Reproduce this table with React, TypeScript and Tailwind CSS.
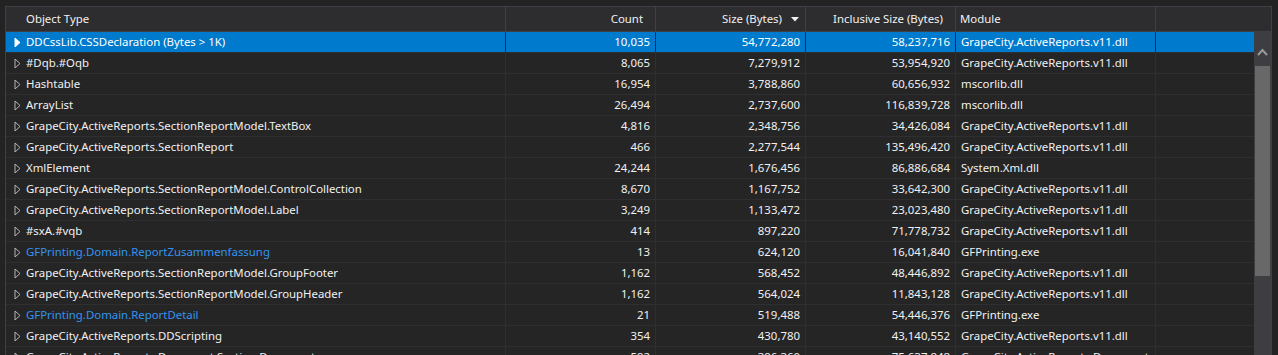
type Row = {
  name: string;
  count: string;
  size: string;
  incl: string;
  module: string;
  link?: boolean;
};

const AR = 'GrapeCity.ActiveReports.v11.dll';

const rows: Row[] = [
  { name: 'DDCssLib.CSSDeclaration (Bytes > 1K)', count: '10,035', size: '54,772,280', incl: '58,237,716', module: AR },
  { name: '#Dqb.#Oqb', count: '8,065', size: '7,279,912', incl: '53,954,920', module: AR },
  { name: 'Hashtable', count: '16,954', size: '3,788,860', incl: '60,656,932', module: 'mscorlib.dll' },
  { name: 'ArrayList', count: '26,494', size: '2,737,600', incl: '116,839,728', module: 'mscorlib.dll' },
  { name: 'GrapeCity.ActiveReports.SectionReportModel.TextBox', count: '4,816', size: '2,348,756', incl: '34,426,084', module: AR },
  { name: 'GrapeCity.ActiveReports.SectionReport', count: '466', size: '2,277,544', incl: '135,496,420', module: AR },
  { name: 'XmlElement', count: '24,244', size: '1,676,456', incl: '86,886,684', module: 'System.Xml.dll' },
  { name: 'GrapeCity.ActiveReports.SectionReportModel.ControlCollection', count: '8,670', size: '1,167,752', incl: '33,642,300', module: AR },
  { name: 'GrapeCity.ActiveReports.SectionReportModel.Label', count: '3,249', size: '1,133,472', incl: '23,023,480', module: AR },
  { name: '#sxA.#vqb', count: '414', size: '897,220', incl: '71,778,732', module: AR },
  { name: 'GFPrinting.Domain.ReportZusammenfassung', count: '13', size: '624,120', incl: '16,041,840', module: 'GFPrinting.exe', link: true },
  { name: 'GrapeCity.ActiveReports.SectionReportModel.GroupFooter', count: '1,162', size: '568,452', incl: '48,446,892', module: AR },
  { name: 'GrapeCity.ActiveReports.SectionReportModel.GroupHeader', count: '1,162', size: '564,024', incl: '11,843,128', module: AR },
  { name: 'GFPrinting.Domain.ReportDetail', count: '21', size: '519,488', incl: '54,446,376', module: 'GFPrinting.exe', link: true },
  { name: 'GrapeCity.ActiveReports.DDScripting', count: '354', size: '430,780', incl: '43,140,552', module: AR },
  { name: 'GrapeCity.ActiveReports.Document.Section.Document', count: '592', size: '396,360', incl: '75,637,848', module: 'GrapeCity.ActiveReports.Document.v11.dll' },
];

const cols = 'grid grid-cols-[500px_150px_150px_150px_200px_1fr]';

function Expander({ selected }: { selected: boolean }) {
  return (
    <svg width="7" height="11" viewBox="0 0 7 11" className="shrink-0">
      <path
        d="M1 1 L6 5.5 L1 10 Z"
        fill={selected ? '#ffffff' : 'none'}
        stroke={selected ? '#ffffff' : '#b4b4b4'}
        strokeWidth="1"
        strokeLinejoin="miter"
      />
    </svg>
  );
}

function DataRow({ row, selected }: { row: Row; selected: boolean }) {
  const line = selected ? 'border-[#252526]' : 'border-[#2f2f31]';
  const bg = selected ? 'bg-[#007acc] text-white' : 'text-[#f1f1f1]';
  return (
    <div className={`${cols} h-[21px] border-b border-[#2f2f31] ${bg}`}>
      <div className={`flex items-center gap-[5px] pl-[8px] border-r ${line} overflow-hidden whitespace-nowrap`}>
        <Expander selected={selected} />
        <span className={row.link && !selected ? 'text-[#3394f0]' : ''}>{row.name}</span>
      </div>
      <div className={`flex items-center justify-end pr-[5px] border-r ${line}`}>{row.count}</div>
      <div className={`flex items-center justify-end pr-[5px] border-r ${line}`}>{row.size}</div>
      <div className={`flex items-center justify-end pr-[5px] border-r ${line}`}>{row.incl}</div>
      <div className={`flex items-center pl-[5px] border-r ${line} overflow-hidden whitespace-nowrap`}>{row.module}</div>
      <div />
    </div>
  );
}

export default function App() {
  return (
    <div
      className="w-[1278px] h-[355px] overflow-hidden bg-[#232323] pt-[6px] pl-[5px] pr-[6px] text-[11.4px] leading-none"
      style={{ fontFamily: '"Noto Sans", "Open Sans", sans-serif' }}
    >
      <div className="h-full flex flex-col border-t border-l border-r border-[#3f3f46] bg-[#252526]">
        {/* header */}
        <div className={`${cols} h-[25px] shrink-0 bg-[#2d2d30] border-b border-[#3f3f46] text-[#f1f1f1]`}>
          <div className="flex items-center pl-[20px] border-r border-[#3f3f46]">Object Type</div>
          <div className="flex items-center justify-end pr-[12px] border-r border-[#3f3f46]">Count</div>
          <div className="flex items-center justify-end pr-[6px] border-r border-[#3f3f46] gap-[9px]">
            <span>Size (Bytes)</span>
            <svg width="8" height="5" viewBox="0 0 8 5">
              <path d="M0 0 H8 L4 4.5 Z" fill="#f1f1f1" />
            </svg>
          </div>
          <div className="flex items-center justify-end pr-[12px] border-r border-[#3f3f46]">Inclusive Size (Bytes)</div>
          <div className="flex items-center pl-[4px] border-r border-[#3f3f46]">Module</div>
          <div />
        </div>

        {/* body */}
        <div className="flex flex-1 min-h-0">
          <div className="flex-1 min-w-0 overflow-hidden">
            {rows.map((r, i) => (
              <DataRow key={i} row={r} selected={i === 0} />
            ))}
          </div>
          <div className="w-[17px] shrink-0 bg-[#3e3e42] flex flex-col items-center">
            <svg width="11" height="8" viewBox="0 0 11 8" className="mt-[16px]">
              <path d="M1 7 L5.5 2 L10 7" fill="none" stroke="#999999" strokeWidth="2" />
            </svg>
            <div className="mt-[10px] w-[15px] h-[210px] bg-[#686868]" />
          </div>
        </div>
      </div>
    </div>
  );
}
